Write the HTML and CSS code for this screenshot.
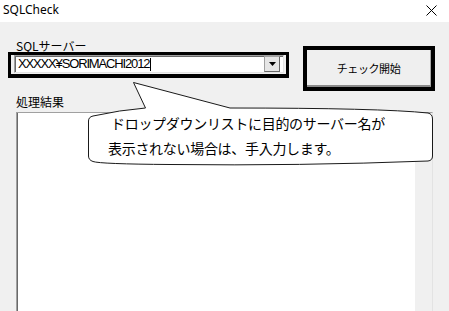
FILE: index.html
```html
<!DOCTYPE html>
<html lang="ja">
<head>
<meta charset="utf-8">
<link rel="stylesheet" href="styles.css">
</head>
<body>
<div class="window">
  <div class="titlebar">
    <span class="title">SQLCheck</span>
    <svg class="close" width="11" height="11" viewBox="0 0 11 11"><path d="M0.5 0.5 L10.5 10.5 M10.5 0.5 L0.5 10.5" stroke="#000" stroke-width="1" fill="none"/></svg>
  </div>
  <div class="main">
    <div class="top">
      <div class="server">
        <div class="label">SQLサーバー</div>
        <div class="highlight combo-frame">
          <div class="combo">
            <span class="combo-text">XXXXX¥SORIMACHI2012</span><span class="caret"></span>
            <span class="spacer"></span>
            <span class="drop"><svg width="7" height="4" viewBox="0 0 7 4"><path d="M0 0 H7 L3.5 4 Z" fill="#000"/></svg></span>
          </div>
        </div>
      </div>
      <div class="highlight btn-frame">
        <div class="btn">チェック開始</div>
      </div>
    </div>
    <div class="label results-label">処理結果</div>
    <div class="results">
      <div class="results-body"></div>
      <div class="scroll"></div>
    </div>
  </div>
  <svg class="bubble" width="449" height="311" viewBox="0 0 449 311">
    <path d="M133.5 82.5 L230 108 Q380 108 428 113 Q432.5 114 432.5 119 L432.5 156 Q432.5 160.5 428 161 Q300 166 170 164.5 Q100 164 93 161.5 Q88.5 160 88.5 156 L88.5 121 Q88.5 117 93 116 Q120 110 145.5 108 Z" fill="#fff" stroke="#1a1a1a" stroke-width="1"/>
  </svg>
  <div class="bubble-text">
    <div class="line1">ドロップダウンリストに目的のサーバー名が</div>
    <div>表示されない場合は、手入力します。</div>
  </div>
</div>
</body>
</html>
```
FILE: styles.css
```css
html, body {
  margin: 0;
  padding: 0;
}
body {
  width: 449px;
  height: 311px;
  overflow: hidden;
  background: #f0f0f0;
  font-family: "Noto Sans CJK JP", "Noto Sans", sans-serif;
  color: #000;
}
.window {
  position: relative;
  width: 449px;
  height: 311px;
}
.titlebar {
  height: 22px;
  background: #fff;
  display: flex;
  align-items: center;
  justify-content: space-between;
}
.title {
  font-family: "Noto Sans", sans-serif;
  font-size: 12px;
  line-height: 20px;
  padding-left: 3px;
  margin-top: -2px;
}
.close {
  margin-right: 12px;
  margin-top: -2px;
}
.main {
  padding: 17px 0 0 8px;
}
.top {
  display: flex;
  align-items: flex-start;
}
.server {
  width: 281px;
}
.label {
  font-size: 12px;
  line-height: 13px;
  height: 13px;
  padding-left: 8px;
}
.highlight {
  border: 3px solid #000;
  box-sizing: border-box;
}
.combo-frame {
  height: 26px;
  border-bottom-width: 4px;
  padding: 0 2px 0 3px;
}
.combo {
  height: 18px;
  box-sizing: border-box;
  background: #fff;
  border: 1px solid #a0a0a0;
  border-right-color: #e3e3e3;
  border-bottom-color: #e3e3e3;
  box-shadow: inset 1px 1px 0 #696969;
  display: flex;
  align-items: center;
  padding-left: 3px;
  padding-right: 3px;
}
.combo-text {
  font-family: "Liberation Sans", sans-serif;
  font-size: 13px;
  letter-spacing: -1.15px;
  line-height: 16px;
}
.caret {
  width: 1px;
  height: 13px;
  background: #000;
  margin-left: 1px;
}
.spacer {
  flex: 1;
}
.drop {
  width: 16px;
  height: 16px;
  box-sizing: border-box;
  background: #e6e6e6;
  border: 1px solid #a0a0a0;
  border-right-color: #696969;
  border-bottom-color: #696969;
  display: flex;
  align-items: center;
  justify-content: center;
}
.btn-frame {
  margin-left: 14px;
  margin-top: 7px;
  width: 132px;
  height: 45px;
  border-width: 4px;
}
.btn {
  height: 100%;
  box-sizing: border-box;
  background: #efefef;
  border-bottom: 2px solid #8a8a8a;
  border-right: 1px solid #a8a8a8;
  display: flex;
  align-items: center;
  justify-content: center;
  font-size: 11px;
  letter-spacing: -0.4px;
  padding-top: 1px;
}
.results-label {
  margin-top: 4px;
  line-height: 14px;
  height: 14px;
}
.results {
  margin-top: 3px;
  margin-left: 8px;
  width: 417px;
  height: 210px;
  box-sizing: border-box;
  border-top: 1px solid #a0a0a0;
  border-left: 1px solid #a0a0a0;
  border-right: 1px solid #e3e3e3;
  box-shadow: inset 1px 0 0 #696969;
  display: flex;
}
.results-body {
  flex: 1;
  background: #fff;
  margin-left: 1px;
}
.scroll {
  width: 17px;
  background: #f0f0f0;
}
.bubble {
  position: absolute;
  left: 0;
  top: 0;
  pointer-events: none;
}
.bubble-text {
  position: absolute;
  left: 108px;
  top: 111px;
  font-size: 14px;
  line-height: 25px;
  letter-spacing: -0.3px;
  white-space: nowrap;
}
.line1 {
  padding-left: 3px;
}
```
